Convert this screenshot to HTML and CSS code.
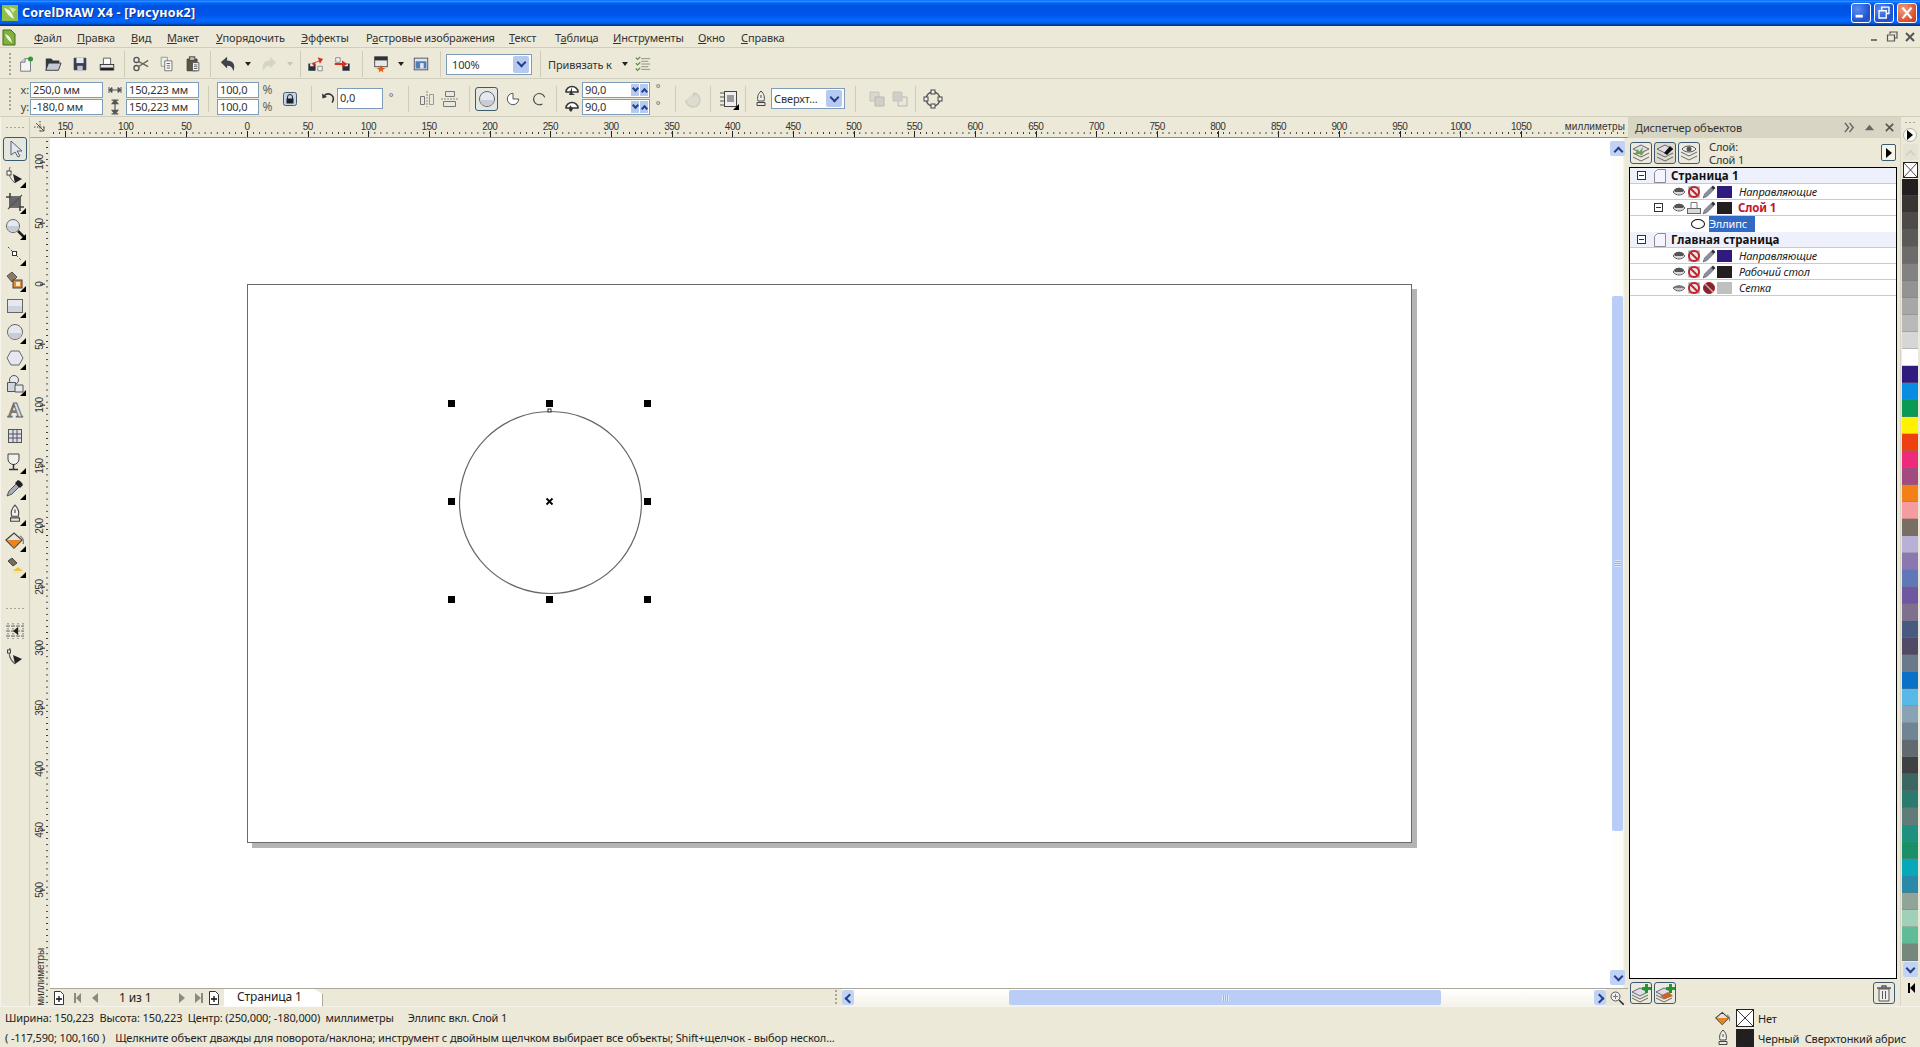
FILE: index.html
```html
<!DOCTYPE html>
<html lang="ru">
<head>
<meta charset="utf-8">
<title>CorelDRAW X4</title>
<link rel="stylesheet" href="styles.css">
</head>
<body>
<svg class="sprite" aria-hidden="true">
  <symbol id="new" viewBox="0 0 20 20"><path d="M4 8l5-4h6v14H4z" fill="#f5f5f0" stroke="#70707a"/><path d="M4 8h5V4" fill="#dcdce0" stroke="#70707a"/><circle cx="15" cy="4.500" r="2.800" fill="#2f9a2f"/></symbol>
  <symbol id="open" viewBox="0 0 20 20"><path d="M2 4h6l2 2h7v3H6l-3 8H2z" fill="#33373f"/><path d="M5 9h14l-3 8H2z" fill="#c4c9d2" stroke="#33373f"/></symbol>
  <symbol id="save" viewBox="0 0 20 20"><rect x="3" y="3" width="14" height="14" rx="1" fill="#3b4050"/><rect x="6" y="3" width="8" height="6" fill="#e8e8ee"/><rect x="7" y="12" width="6" height="5" fill="#c4c4d0"/></symbol>
  <symbol id="print" viewBox="0 0 20 20"><path d="M6 3.500h8v7H6z" fill="#fff" stroke="#555"/><rect x="2.500" y="10.500" width="15" height="6" fill="#e4e4e4" stroke="#333"/><rect x="3" y="14" width="14" height="3" fill="#222"/></symbol>
  <symbol id="cut" viewBox="0 0 20 20"><circle cx="5" cy="5.500" r="2.800" fill="none" stroke="#555" stroke-width="1.500"/><circle cx="5" cy="14.500" r="2.800" fill="none" stroke="#555" stroke-width="1.500"/><path d="M7 7l11 6M7 13l11-7" stroke="#666" stroke-width="1.500"/></symbol>
  <symbol id="copy" viewBox="0 0 20 20"><path d="M3.500 2.500h7v10h-7z" fill="#e8eee8" stroke="#8a9a8a"/><path d="M7.500 6.500h8v11h-8z" fill="#fff" stroke="#6a6a6a"/><path d="M9.500 9.500h4M9.500 12h4M9.500 14.500h4" stroke="#555"/></symbol>
  <symbol id="paste" viewBox="0 0 20 20"><path d="M3.500 4.500h11v13h-11z" fill="#5c5648" stroke="#3c3a30"/><rect x="6" y="2" width="6" height="4" fill="#c8b890" stroke="#444"/><path d="M9.500 8.500h7v9h-7z" fill="#fff" stroke="#555"/><path d="M11 11h4M11 13h4M11 15h4" stroke="#555"/></symbol>
  <symbol id="undo" viewBox="0 0 20 20"><path d="M2 8l7-6v4c6 0 10 4 7 12-1-4-3-6-7-6v3z" fill="#3f434c"/></symbol>
  <symbol id="redo" viewBox="0 0 20 20"><path d="M18 8l-7-6v4C5 6 1 10 4 18c1-4 3-6 7-6v3z" fill="#d4d4c8"/></symbol>
  <symbol id="imp" viewBox="0 0 20 20"><rect x="1.500" y="9.500" width="8" height="8" fill="#2a2e3a"/><rect x="3.500" y="9.500" width="4" height="3" fill="#eee"/><path d="M5 7h8V3l5 3.500-5 4V8H8v2H5z" fill="#d8301c" transform="rotate(-18 11 6)"/><path d="M12 12.500h5v5h-5z" fill="#f0f0f0" stroke="#888"/></symbol>
  <symbol id="exp" viewBox="0 0 20 20"><rect x="10.500" y="9.500" width="8" height="8" fill="#2a2e3a"/><rect x="12.500" y="9.500" width="4" height="3" fill="#eee"/><path d="M3 3h5v5H3z" fill="#f0f0f0" stroke="#888"/><path d="M2 9h8V6l6 4-6 4v-3H2z" fill="#d8301c"/></symbol>
  <symbol id="pub" viewBox="0 0 20 20"><rect x="3" y="2" width="14" height="11" fill="#e8e8e8" stroke="#444"/><rect x="3" y="2" width="14" height="4" fill="#2e3138"/><path d="M10 11l1.500 3 3.500 1-3 1.500.5 3L10 17.500 7.500 19.500l.5-3-3-1.500 3.500-1z" fill="#e85a1c"/></symbol>
  <symbol id="view" viewBox="0 0 20 20"><rect x="2.500" y="3.500" width="15" height="13" fill="#e0e4ec" stroke="#4a4e60"/><rect x="4" y="7" width="12" height="8" fill="#4f7db4"/><rect x="9" y="9" width="4" height="6" fill="#dde6f2"/></symbol>
  <symbol id="opt" viewBox="0 0 20 20"><path d="M2 3l2 2 3-3M2 9l2 2 3-3M2 15l2 2 3-3" fill="none" stroke="#5b8a3a" stroke-width="1.300"/><path d="M8 4h10M8 7h8M8 10h10M8 13h8M8 16h10" stroke="#8a8a80"/></symbol>
  <symbol id="hw" viewBox="0 0 14 10"><path d="M1 5h12M1 2v6M13 2v6M1 5l3-2.500v5zM13 5l-3-2.500v5z" stroke="#555" fill="#555"/></symbol>
  <symbol id="vh" viewBox="0 0 10 14"><path d="M5 1v12M2 1h6M2 13h6M5 1L2.500 4h5zM5 13L2.500 10h5z" stroke="#555" fill="#555"/></symbol>
  <symbol id="lock" viewBox="0 0 14 14"><rect x=".500" y=".500" width="13" height="13" rx="2" fill="#c4d4ec" stroke="#4a5a70"/><path d="M4.500 7V5a2.500 2.500 0 0 1 5 0v2" fill="none" stroke="#222"/><rect x="3.500" y="6.500" width="7" height="5" fill="#222"/></symbol>
  <symbol id="rot" viewBox="0 0 14 14"><path d="M11 10.500A5 5 0 1 0 3.500 3.500" fill="none" stroke="#333" stroke-width="1.600"/><path d="M1 1.500l.5 5 4.500-1.500z" fill="#333"/></symbol>
  <symbol id="mirh" viewBox="0 0 20 20"><path d="M10 2v16" stroke="#8a8a80" stroke-dasharray="2 1"/><path d="M3.500 7.500h4v8h-4z" fill="#e8e8e0" stroke="#777"/><path d="M12.500 5.500h4v10h-4z" fill="#e8e8e0" stroke="#999"/></symbol>
  <symbol id="mirv" viewBox="0 0 20 20"><path d="M1 10h18" stroke="#8a8a80" stroke-dasharray="2 1"/><path d="M5.500 2.500h9v5h-9zM3.500 12.500h12v5h-12z" fill="#e8e8e0" stroke="#777"/></symbol>
  <symbol id="pie" viewBox="0 0 16 16"><path d="M8 1.500a6.500 6.500 0 1 1-6.500 6.500H8z" fill="#fff" stroke="#444" transform="rotate(90 8 8)"/></symbol>
  <symbol id="arc" viewBox="0 0 16 16"><path d="M13.500 4A6.500 6.500 0 1 0 13.500 12" fill="none" stroke="#444" stroke-width="1.200" transform="rotate(20 8 8)"/></symbol>
  <symbol id="ang1" viewBox="0 0 14 12"><path d="M1 8a6 5.500 0 0 1 12 0z" fill="#fff" stroke="#333" stroke-width="1.500"/><path d="M7 3v6l3 2H4z" fill="#333"/></symbol>
  <symbol id="ang2" viewBox="0 0 14 12"><path d="M1 7a6 5.500 0 0 1 12 0z" fill="#fff" stroke="#333" stroke-width="1.500"/><path d="M5 4l3 4-2 3-2-2z" fill="#333"/></symbol>
  <symbol id="clock" viewBox="0 0 20 20"><path d="M10 4a7 7 0 1 1-7 7" fill="#dedcd0" stroke="#cfcdc0" stroke-width="1.500"/><path d="M10 3l3 3-3 2z" fill="#cfcdc0"/></symbol>
  <symbol id="wrap" viewBox="0 0 20 20"><path d="M1 4h5M1 8h4M1 12h4M1 16h5" stroke="#555"/><rect x="5.500" y="2.500" width="12" height="15" fill="#eee" stroke="#444"/><rect x="8" y="6" width="7" height="7" fill="#9a9a9a"/></symbol>
  <symbol id="pen" viewBox="0 0 14 18"><path d="M7 1c3 3 4 6 3 10H4C3 7 4 4 7 1z" fill="#f0f0ec" stroke="#444"/><path d="M7 5v3" stroke="#444"/><path d="M3 12.500h8v3H3z" fill="#e8e8e0" stroke="#444"/></symbol>
  <symbol id="back" viewBox="0 0 20 20"><path d="M3 3h9v9H3z" fill="#d8d8d0" stroke="#c4c4ba"/><path d="M8 8h9v9H8z" fill="#cfcfc8" stroke="#b8b8ae"/></symbol>
  <symbol id="front" viewBox="0 0 20 20"><path d="M8 8h9v9H8z" fill="#e6e6dc" stroke="#b8b8ae"/><path d="M3 3h9v9H3z" fill="#cfcfc8" stroke="#c4c4ba"/></symbol>
  <symbol id="curve" viewBox="0 0 20 20"><circle cx="10" cy="10" r="7" fill="none" stroke="#555" stroke-width="1.300"/><rect x="8" y="1" width="4" height="4" fill="#eee" stroke="#444"/><rect x="8" y="15" width="4" height="4" fill="#eee" stroke="#444"/><rect x="1" y="8" width="4" height="4" fill="#eee" stroke="#444"/><rect x="15" y="8" width="4" height="4" fill="#eee" stroke="#444"/></symbol>
  <symbol id="pick" viewBox="0 0 20 20"><path d="M6 2v14l4-3 3 5 2-1-3-5h5z" fill="#e4e8f0" stroke="#5a6070"/></symbol>
  <symbol id="shape" viewBox="0 0 20 20"><path d="M5 1c-2 6-1 11 5 16" fill="none" stroke="#666"/><rect x="2" y="5" width="4" height="4" fill="#fff" stroke="#444"/><path d="M8 8l9 5-7 4z" fill="#222"/></symbol>
  <symbol id="crop" viewBox="0 0 20 20"><path d="M5 1v14h14M1 5h14v14" fill="none" stroke="#444" stroke-width="1.600"/><rect x="6" y="6" width="8" height="8" fill="#666"/><path d="M3 17L17 3" stroke="#555" stroke-width="1.300"/></symbol>
  <symbol id="zoom" viewBox="0 0 20 20"><circle cx="8" cy="8" r="6.500" fill="#e4e8f0" stroke="#666"/><path d="M2 8h12a6 6 0 0 1-12 0z" fill="#c4ccd8"/><path d="M13 13l6 6" stroke="#222" stroke-width="2.500"/></symbol>
  <symbol id="free" viewBox="0 0 20 20"><path d="M3 3l14 14" stroke="#444" stroke-dasharray="2 2"/><rect x="7.500" y="7.500" width="4" height="4" fill="#fff" stroke="#333"/></symbol>
  <symbol id="smart" viewBox="0 0 20 20"><path d="M2 6l5-4 5 5-5 5z" fill="#8a7a68" stroke="#555"/><rect x="8" y="10" width="9" height="8" fill="#e88a30" stroke="#444"/><rect x="11" y="12" width="4" height="4" fill="#f4f0e0"/></symbol>
  <symbol id="rect" viewBox="0 0 20 20"><rect x="2.500" y="3.500" width="15" height="13" fill="#e6e8f0" stroke="#666"/><rect x="3" y="10" width="14" height="6" fill="#cfd3dc"/></symbol>
  <symbol id="ell" viewBox="0 0 20 20"><circle cx="10" cy="10" r="7.500" fill="#e6e8f0" stroke="#666"/><path d="M3 11h14a7 6 0 0 1-14 0z" fill="#c8ccd6"/></symbol>
  <symbol id="poly" viewBox="0 0 20 20"><path d="M6 3h8l4 7-4 7H6l-4-7z" fill="#e6e8f0" stroke="#666"/></symbol>
  <symbol id="basic" viewBox="0 0 20 20"><circle cx="9" cy="6" r="4.500" fill="#e6e8f0" stroke="#555"/><path d="M2.500 8.500h8v9h-8z" fill="#d0d4dc" stroke="#555"/><path d="M10 11h8v7h-8z" fill="#e6e8f0" stroke="#555"/></symbol>
  <symbol id="table" viewBox="0 0 20 20"><rect x="3.500" y="3.500" width="13" height="13" fill="#dde" stroke="#555"/><path d="M3 8h14M3 12h14M8 3v14M12 3v14" stroke="#555"/></symbol>
  <symbol id="dim" viewBox="0 0 20 20"><path d="M3 2h11v5a5.500 5.500 0 0 1-11 0z" fill="#f0f0ec" stroke="#444"/><path d="M8.500 12v5M4 17.500h9" stroke="#333" stroke-width="1.500"/></symbol>
  <symbol id="drop" viewBox="0 0 20 20"><path d="M2 18l2-5 7-7 3 3-7 7z" fill="#a8aeb8" stroke="#555"/><path d="M10 5l3-3 2 1 2 2 1 2-3 3z" fill="#222"/></symbol>
  <symbol id="fill" viewBox="0 0 20 20"><path d="M1 10l8-7 8 7-8 8z" fill="#e4e4dc" stroke="#444" stroke-width="1.300"/><path d="M2 10h14l-7 8z" fill="#e8861c"/><path d="M15 6c3 1 4 5 3 8" fill="none" stroke="#555"/></symbol>
  <symbol id="ifill" viewBox="0 0 20 20"><path d="M3 5l4-3 5 5-4 3z" fill="#7a6a58" stroke="#444"/><path d="M8 15l5-4 5 4z" fill="#f0c040"/><path d="M8 16h10v1H8z" fill="#e8e0b8"/></symbol>
  <symbol id="snap" viewBox="0 0 20 20"><path d="M3 2v16M8 2v16M13 2v16M18 2v16M1 5h18M1 10h18M1 15h18" stroke="#666" stroke-dasharray="1.500 1"/><path d="M13 6v8l-5-4z" fill="#222"/></symbol>
  <symbol id="hand" viewBox="0 0 20 20"><path d="M5 1c-2 6-1 11 5 16" fill="none" stroke="#666" stroke-width="1.300"/><rect x="2.500" y="3" width="3" height="3" fill="#eee" stroke="#444"/><path d="M8 8l9 4-7 5z" fill="#222"/></symbol>
  <symbol id="corner" viewBox="0 0 12 12"><path d="M6 0v12M0 6h12" stroke="#444" stroke-dasharray="1.500 1.500"/><path d="M2 2l8 8M6 10h4V6" fill="none" stroke="#555"/></symbol>
  <symbol id="lyr" viewBox="0 0 20 20"><path d="M2 6l8-4 8 4-8 4z" fill="#dde" stroke="#666"/><path d="M2 10l8 4 8-4M2 14l8 4 8-4" fill="none" stroke="#666"/><path d="M3 12l4-6 1 3 4-5-1 5 4-2-5 6-1-2z" fill="#6fa050"/></symbol>
  <symbol id="lyr2" viewBox="0 0 20 20"><path d="M2 6l8-4 8 4-8 4z" fill="#dde" stroke="#666"/><path d="M2 10l8 4 8-4M2 14l8 4 8-4" fill="none" stroke="#666"/><path d="M9 10l6-7 3 3-6 6z" fill="#111"/></symbol>
  <symbol id="lyr3" viewBox="0 0 20 20"><path d="M2 9l8 4 8-4M2 13l8 4 8-4" fill="none" stroke="#666"/><path d="M3 6c3-4 11-4 14 0-3 4-11 4-14 0z" fill="#eee" stroke="#555"/><circle cx="10" cy="6" r="2.500" fill="#555"/></symbol>
  <symbol id="addl" viewBox="0 0 20 20"><path d="M1 9l8-4 8 4-8 4z" fill="#dde" stroke="#666"/><path d="M1 12l8 4 8-4M1 15l8 4 8-4" fill="none" stroke="#666"/><path d="M14 1h3v3h3v3h-3v3h-3V7h-3V4h3z" fill="#1e9a2e"/></symbol>
  <symbol id="addm" viewBox="0 0 20 20"><path d="M1 9l8-4 8 4-8 4z" fill="#dde" stroke="#666"/><path d="M1 12l8 4 8-4M1 15l8 4 8-4" fill="none" stroke="#666"/><path d="M5 13l8-4 5 4-8 3z" fill="#c8642c"/><path d="M14 1h3v3h3v3h-3v3h-3V7h-3V4h3z" fill="#1e9a2e"/></symbol>
  <symbol id="trash" viewBox="0 0 20 20"><path d="M3 5h14M8 5V3h4v2" fill="none" stroke="#555" stroke-width="1.300"/><path d="M5 6h10v12H5zM8.500 8v8M11.500 8v8" fill="#eee" stroke="#555"/></symbol>
  <symbol id="eye" viewBox="0 0 14 10"><path d="M1 5c3-5 9-5 12 0-3 4-9 4-12 0z" fill="#d8d8dc" stroke="#666"/><path d="M2 3c3-3 7-3 10 0l-1 2H3z" fill="#555"/></symbol>
  <symbol id="eyeoff" viewBox="0 0 14 10"><path d="M1 5c3-3 9-3 12 0-3 4-9 4-12 0z" fill="#c8c8cc" stroke="#666"/><path d="M1 5c3-3 9-3 12 0z" fill="#777"/></symbol>
  <symbol id="noprn" viewBox="0 0 14 14"><rect x="2" y="2" width="10" height="10" fill="#e8e8e8" stroke="#888"/><circle cx="7" cy="7" r="5" fill="none" stroke="#c4202c" stroke-width="2"/><path d="M3.500 3.500l7 7" stroke="#c4202c" stroke-width="2"/></symbol>
  <symbol id="prn" viewBox="0 0 14 12"><path d="M4 .500h6v6H4z" fill="#fff" stroke="#777"/><rect x=".500" y="6.500" width="13" height="5" fill="#d8d8d8" stroke="#666"/></symbol>
  <symbol id="pencil" viewBox="0 0 14 14"><path d="M1 13l1.500-4L9 2.500 11.500 5 5 11.500z" fill="#8a90a0" stroke="#555" stroke-width=".6"/><path d="M9 2.500L11 .5 13.500 3 11.500 5z" fill="#333"/></symbol>
  <symbol id="nopen" viewBox="0 0 14 14"><circle cx="7" cy="7" r="5.500" fill="#7a2a30" stroke="#a82028"/><path d="M3 3l8 8" stroke="#e8a0a0" stroke-width="1.500"/></symbol>
  <symbol id="page" viewBox="0 0 12 14"><path d="M.5 3.500l3-3h8v13H.5z" fill="#f4f4fa" stroke="#8a8a9a"/></symbol>
  <symbol id="addpg" viewBox="0 0 12 14"><path d="M1.500.5h6l3 3v10h-9z" fill="#fff" stroke="#333"/><path d="M6 5v6M3 8h6" stroke="#111" stroke-width="1.300"/></symbol>
  <symbol id="zoomnav" viewBox="0 0 14 14"><circle cx="5.500" cy="5.500" r="4.500" fill="#f0f0f0" stroke="#555"/><path d="M3 5.500h5M5.500 3v5" stroke="#777"/><path d="M9 9l5 5" stroke="#333" stroke-width="1.600"/></symbol>
</svg>

<div class="app">
  <header class="titlebar">
    <svg class="title-icon" viewBox="0 0 16 16"><rect width="16" height="16" fill="#8fc04a"/><path d="M2 3c5 1 8 4 10 11-4-2-8-6-10-11z" fill="#f2f6e0"/><path d="M7 2l7 2-3 4z" fill="#d8e8a0"/></svg>
    <span class="title-text">CorelDRAW X4 - [Рисунок2]</span>
    <div class="win-buttons">
      <span class="winbtn"><svg viewBox="0 0 20 20"><rect x="4" y="12" width="8" height="3" fill="#fff"/></svg></span>
      <span class="winbtn"><svg viewBox="0 0 20 20"><path d="M7.500 6.500V3.500h8v7h-3M4.500 7.500h8v8h-8z" fill="none" stroke="#fff" stroke-width="1.500"/></svg></span>
      <span class="winbtn close"><svg viewBox="0 0 20 20"><path d="M5 4l10 12M15 4L5 16" stroke="#fff" stroke-width="2.400"/></svg></span>
    </div>
  </header>

  <nav class="menubar">
    <svg class="doc-icon" viewBox="0 0 14 17"><path d="M1 1h8l4 4v11H1z" fill="#7fb040" stroke="#4a6a20"/><path d="M3 5c4 1 6 4 7 9-3-2-6-5-7-9z" fill="#eef4d8"/></svg>
    <div class="menu-items">
      <span><u>Ф</u>айл</span><span><u>П</u>равка</span><span><u>В</u>ид</span><span><u>М</u>акет</span><span><u>У</u>порядочить</span><span><u>Э</u>ффекты</span><span>Р<u>а</u>стровые изображения</span><span><u>Т</u>екст</span><span>Т<u>а</u>блица</span><span><u>И</u>нструменты</span><span><u>О</u>кно</span><span><u>С</u>правка</span>
    </div>
    <div class="mdi">
      <svg viewBox="0 0 12 12"><rect x="3" y="8" width="6" height="2" fill="#777"/></svg>
      <svg viewBox="0 0 12 12"><path d="M4 3V1h7v6H9M1.500 4h7v6h-7z" fill="none" stroke="#555" stroke-width="1.200"/></svg>
      <svg viewBox="0 0 12 12"><path d="M2 2l8 8M10 2l-8 8" stroke="#555" stroke-width="2"/></svg>
    </div>
  </nav>

  <div class="toolbar">
    <span class="grip-v"></span>
    <span class="btn w27"><svg class="i"><use href="#new"/></svg></span>
    <span class="btn w27"><svg class="i"><use href="#open"/></svg></span>
    <span class="btn w27"><svg class="i"><use href="#save"/></svg></span>
    <span class="btn w27"><svg class="i"><use href="#print"/></svg></span>
    <span class="sep w8"></span>
    <span class="btn w26"><svg class="i"><use href="#cut"/></svg></span>
    <span class="btn w26"><svg class="i"><use href="#copy"/></svg></span>
    <span class="btn w26"><svg class="i"><use href="#paste"/></svg></span>
    <span class="sep w8"></span>
    <span class="btn w28"><svg class="i"><use href="#undo"/></svg></span>
    <span class="btn w12"><i class="caret"></i></span>
    <span class="btn w30"><svg class="i"><use href="#redo"/></svg></span>
    <span class="btn w12"><i class="caret off"></i></span>
    <span class="sep w8"></span>
    <span class="btn w24"><svg class="i"><use href="#imp"/></svg></span>
    <span class="btn w28"><svg class="i"><use href="#exp"/></svg></span>
    <span class="sep w12"></span>
    <span class="btn w26"><svg class="i"><use href="#pub"/></svg></span>
    <span class="btn w14"><i class="caret"></i></span>
    <span class="btn w26"><svg class="i"><use href="#view"/></svg></span>
    <span class="sep w12"></span>
    <span class="combo zoomcombo"><span class="combo-text">100%</span><span class="combo-arrow"><i class="chev"></i></span></span>
    <span class="sep w16"></span>
    <span class="snap-label">Привязать к</span>
    <span class="btn w14"><i class="caret"></i></span>
    <span class="btn w22"><svg class="i"><use href="#opt"/></svg></span>
  </div>

  <div class="propbar">
    <span class="grip-v"></span>
    <div class="stack labels"><span>x:</span><span>y:</span></div>
    <div class="stack w73"><span class="field">250,0 мм</span><span class="field">-180,0 мм</span></div>
    <div class="stack w23 mid"><svg class="i14"><use href="#hw"/></svg><svg class="i14"><use href="#vh"/></svg></div>
    <div class="stack w73"><span class="field">150,223 мм</span><span class="field">150,223 мм</span></div>
    <span class="sep w18"></span>
    <div class="stack w42"><span class="field">100,0</span><span class="field">100,0</span></div>
    <div class="stack w17 mid pct"><span>%</span><span>%</span></div>
    <span class="btn w27"><svg class="i14"><use href="#lock"/></svg></span>
    <span class="sep w16"></span>
    <span class="btn w18"><svg class="i14"><use href="#rot"/></svg></span>
    <span class="field big w46">0,0</span>
    <span class="deg w16">°</span>
    <span class="sep w18"></span>
    <span class="btn w20"><svg class="i"><use href="#mirh"/></svg></span>
    <span class="btn w25"><svg class="i"><use href="#mirv"/></svg></span>
    <span class="sep w13"></span>
    <span class="btn pressed"><svg class="i"><use href="#ell"/></svg></span>
    <span class="btn w30"><svg class="i14"><use href="#pie"/></svg></span>
    <span class="btn w22"><svg class="i14"><use href="#arc"/></svg></span>
    <span class="sep w12"></span>
    <div class="stack w20 mid"><svg class="i14"><use href="#ang1"/></svg><svg class="i14"><use href="#ang2"/></svg></div>
    <div class="stack w68">
      <span class="field spin">90,0<b class="spin-btn"><i class="chev"></i><i class="chev up"></i></b></span>
      <span class="field spin">90,0<b class="spin-btn"><i class="chev"></i><i class="chev up"></i></b></span>
    </div>
    <div class="stack w16 mid degs"><span>°</span><span>°</span></div>
    <span class="sep w18"></span>
    <span class="btn w18"><svg class="i"><use href="#clock"/></svg></span>
    <span class="sep w16"></span>
    <span class="btn w22 fly"><svg class="i"><use href="#wrap"/></svg></span>
    <span class="sep w10"></span>
    <span class="btn w21"><svg class="pen"><use href="#pen"/></svg></span>
    <span class="combo pencombo"><span class="combo-text">Сверхт...</span><span class="combo-arrow"><i class="chev"></i></span></span>
    <span class="sep w20"></span>
    <span class="btn w23"><svg class="i"><use href="#back"/></svg></span>
    <span class="btn w24"><svg class="i"><use href="#front"/></svg></span>
    <span class="sep w6"></span>
    <span class="btn w30"><svg class="i"><use href="#curve"/></svg></span>
  </div>

  <main class="workspace">
    <aside class="toolbox">
      <span class="grip-h"></span>
      <span class="tool selected"><svg class="i"><use href="#pick"/></svg></span>
      <span class="tool fly"><svg class="i"><use href="#shape"/></svg></span>
      <span class="tool fly"><svg class="i"><use href="#crop"/></svg></span>
      <span class="tool fly"><svg class="i"><use href="#zoom"/></svg></span>
      <span class="tool fly"><svg class="i"><use href="#free"/></svg></span>
      <span class="tool fly"><svg class="i"><use href="#smart"/></svg></span>
      <span class="tool fly"><svg class="i"><use href="#rect"/></svg></span>
      <span class="tool fly"><svg class="i"><use href="#ell"/></svg></span>
      <span class="tool fly"><svg class="i"><use href="#poly"/></svg></span>
      <span class="tool fly"><svg class="i"><use href="#basic"/></svg></span>
      <span class="tool"><span class="tool-a">A</span></span>
      <span class="tool"><svg class="i"><use href="#table"/></svg></span>
      <span class="tool fly"><svg class="i"><use href="#dim"/></svg></span>
      <span class="tool fly"><svg class="i"><use href="#drop"/></svg></span>
      <span class="tool fly"><svg class="i"><use href="#pen"/></svg></span>
      <span class="tool fly"><svg class="i"><use href="#fill"/></svg></span>
      <span class="tool fly"><svg class="i"><use href="#ifill"/></svg></span>
      <span class="grip-h lower"></span>
      <span class="tool"><svg class="i"><use href="#snap"/></svg></span>
      <span class="tool"><svg class="i"><use href="#hand"/></svg></span>
    </aside>

    <div class="stage">
      <div class="corner"><svg class="corner-i"><use href="#corner"/></svg></div>
      <div class="hruler">
        <div class="hticks">
          <span>150</span><span>100</span><span>50</span><span>0</span><span>50</span><span>100</span><span>150</span><span>200</span><span>250</span><span>300</span><span>350</span><span>400</span><span>450</span><span>500</span><span>550</span><span>600</span><span>650</span><span>700</span><span>750</span><span>800</span><span>850</span><span>900</span><span>950</span><span>1000</span><span>1050</span>
        </div>
        <span class="hunit">миллиметры</span>
      </div>
      <div class="vruler">
        <div class="vticks">
          <span>100</span><span>50</span><span>0</span><span>50</span><span>100</span><span>150</span><span>200</span><span>250</span><span>300</span><span>350</span><span>400</span><span>450</span><span>500</span>
        </div>
        <span class="vunit">миллиметры</span>
      </div>
      <div class="canvas-row">
        <div class="canvas">
          <div class="page">
            <svg class="selection" viewBox="0 0 220 220">
              <circle cx="110.500" cy="110.500" r="91" fill="none" stroke="#666" stroke-width="1.200"/>
              <rect x="108" y="17" width="3" height="3" fill="#fff" stroke="#222"/>
              <g fill="#000">
                <rect x="8" y="8" width="7" height="7"/><rect x="106" y="8" width="7" height="7"/><rect x="204" y="8" width="7" height="7"/>
                <rect x="8" y="106" width="7" height="7"/><rect x="204" y="106" width="7" height="7"/>
                <rect x="8" y="204" width="7" height="7"/><rect x="106" y="204" width="7" height="7"/><rect x="204" y="204" width="7" height="7"/>
              </g>
              <path d="M106.500 106.500l6 6M112.500 106.500l-6 6" stroke="#000" stroke-width="1.800"/>
            </svg>
          </div>
        </div>
        <div class="vscroll">
          <span class="sb-btn"><i class="chev up"></i></span>
          <span class="vthumb"><i></i></span>
          <span class="sb-btn"><i class="chev"></i></span>
        </div>
      </div>
      <div class="strip">
        <span class="nav w18"><svg class="i12"><use href="#addpg"/></svg></span>
        <span class="nav w18"><i class="tri-l bar"></i></span>
        <span class="nav w18"><i class="tri-l"></i></span>
        <span class="page-count">1 из 1</span>
        <span class="nav w18"><i class="tri-r"></i></span>
        <span class="nav w14"><i class="tri-r bar"></i></span>
        <span class="nav w18"><svg class="i12"><use href="#addpg"/></svg></span>
        <span class="tab">Страница 1</span>
        <span class="grow"></span>
        <span class="hgrip"></span>
        <div class="hscroll">
          <span class="sb-btn h"><i class="chev left"></i></span>
          <span class="hthumb"><i></i></span>
          <span class="sb-btn h"><i class="chev right"></i></span>
        </div>
        <span class="nav w22"><svg class="i14"><use href="#zoomnav"/></svg></span>
      </div>
    </div>

    <section class="docker">
      <div class="docker-title">
        <span>Диспетчер объектов</span>
        <span class="docker-ctl">
          <svg viewBox="0 0 12 12"><path d="M1 1l4 5-4 5M6 1l4 5-4 5" fill="none" stroke="#666" stroke-width="1.600"/></svg>
          <svg viewBox="0 0 12 12"><path d="M1 9l5-6 5 6z" fill="#666"/></svg>
          <svg viewBox="0 0 12 12"><path d="M2 2l8 8M10 2l-8 8" stroke="#555" stroke-width="1.800"/></svg>
        </span>
      </div>
      <div class="docker-tools">
        <span class="dbtn"><svg class="i"><use href="#lyr"/></svg></span>
        <span class="dbtn on"><svg class="i"><use href="#lyr2"/></svg></span>
        <span class="dbtn"><svg class="i"><use href="#lyr3"/></svg></span>
        <div class="layer-name"><span>Слой:</span><span>Слой 1</span></div>
        <span class="dmenu"><i class="tri-r black"></i></span>
      </div>
      <div class="tree">
        <div class="row head"><span class="box"></span><svg class="pg"><use href="#page"/></svg><b>Страница 1</b></div>
        <div class="row child"><svg class="eye"><use href="#eye"/></svg><svg class="ti"><use href="#noprn"/></svg><svg class="ti"><use href="#pencil"/></svg><i class="swatch navy"></i><em>Направляющие</em></div>
        <div class="row child layer"><span class="box"></span><svg class="eye"><use href="#eye"/></svg><svg class="ti"><use href="#prn"/></svg><svg class="ti"><use href="#pencil"/></svg><i class="swatch black"></i><b class="red">Слой 1</b></div>
        <div class="row object"><span class="oval"></span><span class="sel">Эллипс</span></div>
        <div class="row head"><span class="box"></span><svg class="pg"><use href="#page"/></svg><b>Главная страница</b></div>
        <div class="row child"><svg class="eye"><use href="#eye"/></svg><svg class="ti"><use href="#noprn"/></svg><svg class="ti"><use href="#pencil"/></svg><i class="swatch navy"></i><em>Направляющие</em></div>
        <div class="row child"><svg class="eye"><use href="#eye"/></svg><svg class="ti"><use href="#noprn"/></svg><svg class="ti"><use href="#pencil"/></svg><i class="swatch black"></i><em>Рабочий стол</em></div>
        <div class="row child"><svg class="eye"><use href="#eyeoff"/></svg><svg class="ti"><use href="#noprn"/></svg><svg class="ti"><use href="#nopen"/></svg><i class="swatch grey"></i><em>Сетка</em></div>
      </div>
      <div class="docker-foot">
        <span class="dbtn"><svg class="i"><use href="#addl"/></svg></span>
        <span class="dbtn"><svg class="i"><use href="#addm"/></svg></span>
        <span class="grow"></span>
        <span class="dbtn"><svg class="i"><use href="#trash"/></svg></span>
      </div>
    </section>

    <aside class="palette">
      <span class="grip-h small"></span>
      <span class="pal-fly"><i class="tri-r black"></i></span>
      <span class="pal-up"><i class="chev up pale"></i></span>
      <span class="pal-none"><svg viewBox="0 0 15 15" preserveAspectRatio="none"><path d="M0 0l15 15M15 0L0 15" stroke="#333"/></svg></span>
      <div class="swatches">
        <i class="c1"></i><i class="c2"></i><i class="c3"></i><i class="c4"></i><i class="c5"></i><i class="c6"></i><i class="c7"></i><i class="c8"></i><i class="c9"></i><i class="c10"></i><i class="c11"></i><i class="c12"></i><i class="c13"></i><i class="c14"></i><i class="c15"></i><i class="c16"></i><i class="c17"></i><i class="c18"></i><i class="c19"></i><i class="c20"></i><i class="c21"></i><i class="c22"></i><i class="c23"></i><i class="c24"></i><i class="c25"></i><i class="c26"></i><i class="c27"></i><i class="c28"></i><i class="c29"></i><i class="c30"></i><i class="c31"></i><i class="c32"></i><i class="c33"></i><i class="c34"></i><i class="c35"></i><i class="c36"></i><i class="c37"></i><i class="c38"></i><i class="c39"></i><i class="c40"></i><i class="c41"></i><i class="c42"></i><i class="c43"></i><i class="c44"></i><i class="c45"></i><i class="c46"></i>
      </div>
      <span class="pal-down"><i class="chev"></i></span>
      <span class="pal-end"><i class="tri-l bar black"></i></span>
    </aside>
  </main>

  <footer class="status">
    <div class="status-lines">
      <div class="sline"><span>Ширина: 150,223&nbsp; Высота: 150,223&nbsp; Центр: (250,000; -180,000)&nbsp; миллиметры</span><span class="gap">Эллипс вкл. Слой 1</span></div>
      <div class="sline"><span>( -117,590; 100,160 )</span><span class="gap2">Щелкните объект дважды для поворота/наклона; инструмент с двойным щелчком выбирает все объекты; Shift+щелчок - выбор нескол...</span></div>
    </div>
    <div class="status-right">
      <div class="srow"><svg class="sicon"><use href="#fill"/></svg><span class="sw none"><svg viewBox="0 0 18 18" preserveAspectRatio="none"><path d="M0 0l18 18M18 0L0 18" stroke="#222"/></svg></span><span>Нет</span></div>
      <div class="srow"><svg class="sicon"><use href="#pen"/></svg><span class="sw dark"></span><span>Черный&nbsp; Сверхтонкий абрис</span></div>
    </div>
  </footer>
</div>
</body>
</html>
```

FILE: styles.css
```css
* { box-sizing: border-box; }
html, body { margin: 0; height: 100%; overflow: hidden; }
body { font: 11px/1 "Noto Sans", "Liberation Sans", sans-serif; letter-spacing: -.14px; color: #222; background: #ece9d8; }
.sprite { display: none; }
.app { width: 1920px; height: 1047px; display: flex; flex-direction: column; }
i { display: block; font-style: normal; }

/* Title bar */
.titlebar { height: 26px; flex: none; display: flex; align-items: center; padding-left: 2px; color: #fff;
  background: linear-gradient(#0058ee 0, #3593ff 4%, #288eff 6%, #127dff 8%, #036ffc 10%, #0262ee 14%, #0057e5 20%, #0054e3 24%, #0055eb 56%, #005bf5 66%, #026afe 76%, #0062ef 86%, #0052d6 92%, #0040ab 94%, #003092 100%); }
.title-icon { width: 16px; height: 16px; }
.title-text { margin-left: 4px; font-size: 12.500px; font-weight: 700; letter-spacing: .2px; text-shadow: 1px 1px 0 #0f2f8a; }
.win-buttons { margin-left: auto; display: flex; gap: 3px; padding-right: 3px; }
.winbtn { width: 20px; height: 20px; border: 1px solid #fff; border-radius: 3px; background: radial-gradient(circle at 30% 30%, #5a8ef0, #1e50d0 70%, #2a60e0); }
.winbtn svg { display: block; width: 100%; height: 100%; }
.winbtn.close { background: radial-gradient(circle at 30% 30%, #f0a080, #d8502c 70%, #c03a18); }

/* Menu */
.menubar { height: 22px; flex: none; display: flex; align-items: center; padding: 1px 0 0 2px; border-bottom: 1px solid #d0cdbc; }
.doc-icon { width: 14px; height: 17px; }
.menu-items { margin-left: 18px; display: grid; grid-template-columns: 43px 54px 36px 49px 85px 65px 143px 46px 58px 85px 43px auto; color: #333; }
.mdi { margin-left: auto; display: flex; gap: 6px; padding-right: 4px; }
.mdi svg { width: 12px; height: 12px; }

/* Toolbars */
.toolbar, .propbar { flex: none; display: flex; align-items: center; position: relative; border-bottom: 1px solid #d0cdbc; }
.toolbar { height: 31px; padding: 2px 0 0 8px; }
.toolbar .i { width: 18px; height: 18px; }
.propbar { height: 38px; padding: 2px 0 0 8px; }
.grip-v { width: 4px; height: 22px; flex: none; background: linear-gradient(#a8a594 50%, transparent 50%) 1px 0 / 2px 4px repeat-y; }
.btn { height: 24px; flex: none; display: flex; align-items: center; justify-content: center; position: relative; }
.i { width: 20px; height: 20px; flex: none; }
.i14 { width: 14px; height: 14px; flex: none; }
.i12 { width: 12px; height: 14px; flex: none; }
.pen { width: 14px; height: 18px; }
.sep { flex: none; height: 26px; position: relative; }
.sep::after { content: ""; position: absolute; left: 50%; top: 0; bottom: 0; width: 1px; background: #cfccba; }
.w6 { width: 6px; } .w8 { width: 8px; } .w10 { width: 10px; } .w12 { width: 12px; } .w13 { width: 13px; } .w14 { width: 14px; }
.w16 { width: 16px; } .w17 { width: 17px; } .w18 { width: 18px; } .w20 { width: 20px; } .w21 { width: 21px; } .w22 { width: 22px; }
.w23 { width: 23px; } .w24 { width: 24px; } .w25 { width: 25px; } .w26 { width: 26px; } .w27 { width: 27px; } .w28 { width: 28px; }
.w30 { width: 30px; } .w42 { width: 42px; } .w46 { width: 46px; } .w68 { width: 68px; } .w73 { width: 73px; }
.caret { width: 0; height: 0; border: 3px solid transparent; border-top: 4px solid #222; border-bottom: 0; }
.caret.off { border-top-color: #c8c6b6; }
.chev { width: 8px; height: 8px; position: relative; }
.chev::before { content: ""; position: absolute; left: 1px; top: -1px; width: 5px; height: 5px; border: solid #24408c; border-width: 0 2px 2px 0; transform: rotate(45deg); }
.chev.up::before { top: 3px; transform: rotate(225deg); }
.chev.left::before { left: 2px; top: 1px; transform: rotate(135deg); }
.chev.right::before { left: 0; top: 1px; transform: rotate(-45deg); }
.chev.pale::before { border-color: #d6d3c4; }
.combo { flex: none; height: 21px; display: flex; align-items: center; background: #fff; border: 1px solid #7f9db9; }
.zoomcombo { width: 86px; }
.pencombo { width: 74px; }
.combo-text { flex: 1; padding-left: 5px; color: #333; white-space: nowrap; }
.pencombo .combo-text { padding-left: 2px; }
.combo-arrow { width: 16px; height: 17px; margin-right: 2px; display: flex; align-items: center; justify-content: center; background: #b6caf0; border-radius: 2px; }
.snap-label { width: 70px; color: #333; white-space: nowrap; }
.stack { flex: none; display: flex; flex-direction: column; gap: 1px; }
.mid { align-items: center; }
.labels { width: 18px; padding-left: 4px; gap: 1px; color: #444; }
.labels span { height: 16px; line-height: 16px; text-align: right; padding-right: 1px; }
.field { height: 16px; line-height: 14px; padding-left: 2px; background: #fff; border: 1px solid #7f9db9; color: #333; white-space: nowrap; position: relative; display: block; }
.field.big { height: 21px; line-height: 17px; flex: none; }
.stack svg { height: 16px; }
.pct span { height: 16px; line-height: 16px; font-size: 12px; color: #666; }
.deg, .degs span { height: 16px; line-height: 12px; color: #666; text-align: center; flex: none; }
.spin-btn { position: absolute; right: 1px; top: 1px; bottom: 1px; display: flex; gap: 1px; font-weight: 400; }
.spin-btn .chev { width: 8px; height: 12px; background: #b6caf0; }
.spin-btn .chev::before { left: 2px; top: 2px; width: 3px; height: 3px; border-width: 0 2px 2px 0; }
.spin-btn .chev.up::before { top: 5px; }
.pressed { width: 23px; height: 24px; border: 1px solid #3a5a70; border-radius: 3px; background: #e4e6e0; }
.fly::after { content: ""; position: absolute; right: 1px; bottom: 1px; border: 3px solid transparent; border-right-color: #000; border-bottom-color: #000; }

/* Workspace */
.workspace { flex: 1; min-height: 0; display: flex; }
.toolbox { width: 30px; flex: none; display: flex; flex-direction: column; align-items: center; border-right: 1px solid #cfccba; border-left: 1px solid #f6f4ea; }
.grip-h { width: 19px; height: 2px; margin: 10px 0 8px; flex: none; background: linear-gradient(90deg, #a8a594 50%, transparent 50%) 0 0 / 4px 1px repeat-x; }
.grip-h.lower { margin: 29px 0 8px; }
.grip-h.small { width: 10px; margin: 5px 0 3px; }
.tool { width: 24px; height: 26px; flex: none; display: flex; align-items: center; justify-content: center; position: relative; }
.tool.selected { border: 1px solid #3a5a70; border-radius: 3px; background: #e4e6e0; height: 24px; margin-bottom: 2px; }
.tool-a { font: 700 21px/1 "Liberation Serif", serif; color: #dde2ea; -webkit-text-stroke: 1px #666; }

.stage { flex: 1; min-width: 0; display: grid; grid-template-columns: 20px 1fr; grid-template-rows: 21px 1fr 18px; align-items: stretch; }
.corner { display: flex; align-items: center; justify-content: center; border-bottom: 1px solid #aca899; }
.corner-i { width: 12px; height: 12px; }
.hruler { position: relative; overflow: hidden; border-bottom: 1px solid #8f8d80;
  background: linear-gradient(90deg, #333 1px, transparent 1px) 3.100px 15px / 6.068px 2px repeat-x; }
.hticks { display: flex; margin-left: -15.300px; }
.hticks span { flex: none; width: 60.680px; height: 20px; padding-top: 5px; text-align: center; position: relative; font: 10px/1 "Liberation Sans", sans-serif; letter-spacing: -.5px; color: #333; }
.hticks span::after { content: ""; position: absolute; left: 50%; top: 14px; bottom: 0; width: 1px; background: #222; }
.hunit { position: absolute; right: 3px; top: 5px; font: 10px/1 "Liberation Sans", sans-serif; color: #333; background: #ece9d8; letter-spacing: .1px; }
.vruler { grid-row: 2 / 4; position: relative; overflow: hidden;
  background: linear-gradient(#333 1px, transparent 1px) 16px 3px / 2px 6.068px repeat-y; }
.vticks { display: flex; flex-direction: column; margin-top: -5.700px; }
.vticks span { flex: none; width: 15px; height: 60.680px; position: relative; display: flex; align-items: flex-end; writing-mode: vertical-rl; transform: rotate(180deg); justify-content: center; font: 10px/1 "Liberation Sans", sans-serif; letter-spacing: -.5px; color: #333; }
.vticks span::after { content: ""; position: absolute; left: 0; top: 50%; height: 1px; width: 5px; background: #222; }
.vunit { position: absolute; left: 6px; bottom: 0; writing-mode: vertical-rl; transform: rotate(180deg); font: 10px/1 "Liberation Sans", sans-serif; color: #333; background: #ece9d8; }
.canvas-row { display: flex; min-height: 0; }
.canvas { flex: 1; min-width: 0; background: #fff; overflow: hidden; padding: 146px 0 0 197px; }
.page { width: 1165px; height: 559px; background: #fff; border: 1px solid #6a6a6a; box-shadow: 5px 5px 0 #b4b4b4; position: relative; }
.selection { position: absolute; left: 192px; top: 107px; width: 220px; height: 220px; }
.vscroll { width: 18px; flex: none; padding: 3px 3px 3px 0; display: flex; flex-direction: column; align-items: stretch; background: linear-gradient(90deg, #fff 0, #fbfbf6 70%, #ece9d8 83%); }
.sb-btn { flex: none; height: 15px; display: flex; align-items: center; justify-content: center; background: #c1d3f5; border-radius: 2px; }
.sb-btn.h { width: 12px; height: 15px; }
.vthumb { margin: 140px 2px 139px; flex: 1; background: #b9cdf6; border-radius: 2px; display: flex; align-items: center; justify-content: center; }
.vthumb i { width: 6px; height: 7px; background: repeating-linear-gradient(#dbe6fb 0 1px, #9db3e0 1px 2px); }
.strip { display: flex; align-items: center; border-top: 1px solid #aca899; padding-left: 0; min-width: 0; }
.nav { flex: none; height: 17px; display: flex; align-items: center; justify-content: center; }
.tri-l, .tri-r { width: 0; height: 0; border: 5px solid transparent; position: relative; }
.tri-l { border-left: 0; border-right: 6px solid #8a8a80; }
.tri-r { border-right: 0; border-left: 6px solid #8a8a80; }
.tri-l.bar { border-right-width: 5px; margin-left: 2px; }
.tri-l.bar::before { content: ""; position: absolute; left: -2px; top: -5px; width: 2px; height: 10px; background: #8a8a80; }
.tri-r.bar::after { content: ""; position: absolute; left: 0; top: -5px; width: 2px; height: 10px; background: #8a8a80; }
.black { border-left-color: #000; border-right-color: #000; }
.tri-l.black { border-left-color: transparent; }
.tri-r.black { border-right-color: transparent; }
.tri-l.black.bar::before { background: #000; }
.page-count { flex: none; width: 69px; padding-left: 15px; font-size: 12px; color: #222; }
.tab { flex: none; width: 99px; height: 18px; margin-left: 1px; padding-left: 13px; line-height: 16px; font-size: 12px; color: #222; background: #fff; border-right: 1px solid #aca899; clip-path: polygon(0 0, 90% 0, 100% 30%, 100% 100%, 0 100%); }
.grow { flex: 1; }
.hgrip { width: 4px; height: 15px; background: linear-gradient(#a8a594 50%, transparent 50%) 0 0 / 2px 4px repeat-y; margin-right: 3px; }
.hscroll { width: 764px; flex: none; height: 17px; display: flex; align-items: center; background: linear-gradient(#fff, #f4f3ea); }
.hthumb { margin: 0 153px 0 155px; flex: 1; height: 15px; background: #b9cdf6; border-radius: 2px; display: flex; align-items: center; justify-content: center; }
.hthumb i { width: 7px; height: 6px; background: repeating-linear-gradient(90deg, #dbe6fb 0 1px, #9db3e0 1px 2px); }

/* Docker */
.docker { width: 272px; flex: none; display: flex; flex-direction: column; }
.docker-title { height: 21px; flex: none; display: flex; align-items: center; justify-content: space-between; padding: 0 5px 0 7px; background: #d8d5c4; color: #333; }
.docker-ctl { display: flex; gap: 9px; }
.docker-ctl svg { width: 11px; height: 11px; }
.docker-tools { height: 29px; flex: none; display: flex; align-items: center; padding-left: 2px; gap: 2px; }
.dbtn { width: 22px; height: 22px; flex: none; display: flex; align-items: center; justify-content: center; border: 1px solid #3f5a70; border-radius: 3px; background: #eceade; }
.dbtn.on { background: #dcdace; }
.layer-name { margin-left: 7px; display: flex; flex-direction: column; gap: 2px; color: #333; }
.layer-name span { height: 11px; line-height: 11px; }
.dmenu { margin-left: auto; margin-right: 4px; width: 15px; height: 17px; display: flex; align-items: center; justify-content: center; border: 1px solid #3f5a70; border-radius: 2px; background: #f6f5ec; }
.tree { flex: 1; min-height: 0; margin: 0 3px 0 1px; background: #fff; border: 1px solid #000; }
.row { height: 16px; display: flex; align-items: center; border-bottom: 1px solid #c6c9d6; position: relative; }
.row.head { padding-left: 7px; background: #eef0fb; font-size: 11.500px; letter-spacing: .1px; color: #111; }
.box { width: 9px; height: 9px; flex: none; border: 1px solid #333; background: linear-gradient(#333, #333) center / 5px 1px no-repeat #fff; }
.pg { width: 12px; height: 14px; margin: 0 5px 0 8px; flex: none; }
.row.child { padding-left: 42px; }
.row.child.layer { padding-left: 24px; }
.row.layer .eye { margin-left: 9px; }
.eye { width: 14px; height: 10px; flex: none; margin-right: 1px; }
.ti { width: 14px; height: 14px; flex: none; margin-right: 1px; }
.swatch { width: 15px; height: 12px; flex: none; }
.navy { background: #2f1a80; } .grey { background: #c0c0c0; }
.swatch.black { background: #231f20; }
em { margin-left: 7px; color: #222; }
.red { margin-left: 6px; color: #c8102e; font-size: 11.500px; }
.row.object { padding-left: 61px; border-bottom-color: transparent; }
.oval { width: 14px; height: 10px; flex: none; border: 1px solid #111; border-radius: 50%; background: #fff; }
.sel { width: 46px; height: 16px; margin-left: 4px; line-height: 15px; background: #316ac5; color: #fff; }
.docker-foot { height: 27px; flex: none; display: flex; align-items: center; padding: 0 5px 0 2px; gap: 2px; }

/* Palette */
.palette { width: 20px; flex: none; display: flex; flex-direction: column; align-items: center; padding-right: 1px; border-left: 1px solid #d8d5c4; }
.pal-fly { width: 14px; height: 14px; margin-top: 1px; display: flex; align-items: center; justify-content: center; border: 1px solid #b4b2a4; border-radius: 50%; background: #fafaf4; }
.pal-up { width: 15px; height: 16px; margin-top: 2px; display: flex; align-items: center; justify-content: center; background: #e4e2d2; }
.pal-none { width: 15px; height: 16px; margin-top: 2px; border: 1px solid #222; background: #fff; }
.pal-none svg { display: block; width: 100%; height: 100%; }
.swatches { width: 16px; margin-top: 1px; }
.swatches i { height: 17px; box-shadow: inset 0 -1px 0 rgba(120,120,120,.35); }
.pal-down { width: 15px; height: 15px; margin-top: 1px; display: flex; align-items: center; justify-content: center; background: #c1d3f5; border-radius: 2px; }
.pal-end { margin-top: 4px; padding-left: 3px; height: 14px; display: flex; align-items: center; }
.c1{background:#231f20}.c2{background:#383532}.c3{background:#4d4a47}.c4{background:#5c5a58}.c5{background:#6e6c6b}.c6{background:#828282}.c7{background:#939393}.c8{background:#a7a7a7}.c9{background:#b9b9b9}.c10{background:#d6d6d6}.c11{background:#fff}.c12{background:#2f1a80}.c13{background:#0a8ce0}.c14{background:#0a9a55}.c15{background:#fff200}.c16{background:#ee4010}.c17{background:#ee2a7b}.c18{background:#a34a80}.c19{background:#f57f17}.c20{background:#f49ca0}.c21{background:#7a6e62}.c22{background:#b8b0d6}.c23{background:#8c78b0}.c24{background:#6078b8}.c25{background:#7058a0}.c26{background:#807090}.c27{background:#485a80}.c28{background:#504a66}.c29{background:#6a7a8a}.c30{background:#0a70c8}.c31{background:#58b8e8}.c32{background:#88a4b4}.c33{background:#708494}.c34{background:#606a70}.c35{background:#3e4044}.c36{background:#3c6660}.c37{background:#2a7a70}.c38{background:#607c78}.c39{background:#1f9080}.c40{background:#1a9068}.c41{background:#08a8b8}.c42{background:#2a88a8}.c43{background:#90a498}.c44{background:#a0d0b8}.c45{background:#60bc98}.c46{background:#76887c}

/* Status */
.status { height: 41px; flex: none; display: flex; border-top: 1px solid #f6f4ea; padding-top: 1px; }
.status-lines { padding-left: 5px; display: flex; flex-direction: column; }
.sline { height: 20px; line-height: 20px; white-space: nowrap; color: #222; }
.gap { margin-left: 14px; }
.gap2 { margin-left: 10px; }
.status-right { margin-left: auto; width: 205px; flex: none; }
.srow { height: 20px; display: flex; align-items: center; white-space: nowrap; color: #222; }
.sicon { width: 16px; height: 18px; flex: none; margin-right: 5px; }
.sw { width: 18px; height: 18px; flex: none; margin-right: 4px; border: 1px solid #222; }
.sw svg { display: block; width: 100%; height: 100%; }
.sw.none { background: #fff; }
.sw.dark { background: #231f20; }
```
